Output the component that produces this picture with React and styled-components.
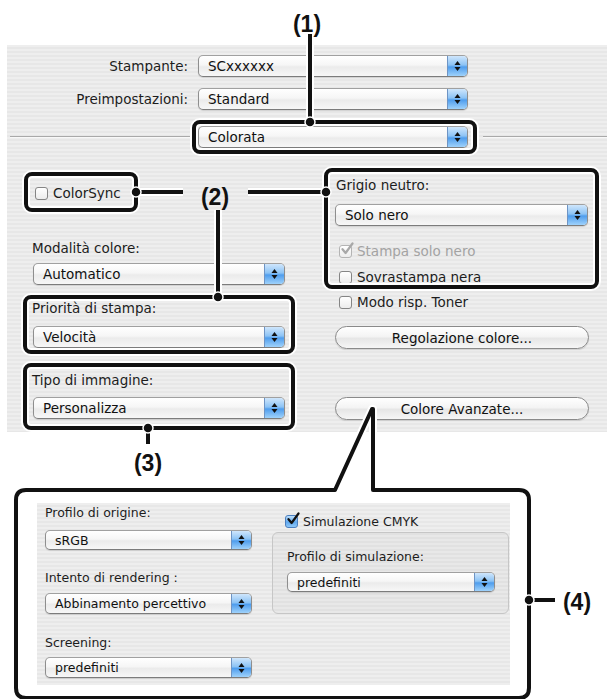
import styled, { createGlobalStyle } from "styled-components";

const GlobalStyle = createGlobalStyle`
  html, body {
    margin: 0;
    padding: 0;
    background: #fff;
  }
  body {
    font-family: "DejaVu Sans", Verdana, sans-serif;
  }
`;

const pinstripe = `
  background-color: #ebebeb;
  background-image: repeating-linear-gradient(
    to bottom,
    #eeeeee 0px,
    #eeeeee 2px,
    #e7e7e7 2px,
    #e7e7e7 4px
  );
`;

function Arrows() {
  return (
    <svg width="7" height="12" viewBox="0 0 7 12">
      <polygon points="3.5,1 6.5,5 0.5,5" fill="#111" />
      <polygon points="0.5,7 6.5,7 3.5,11" fill="#111" />
    </svg>
  );
}

function Dropdown({ value, w, h }) {
  return (
    <Popup $w={w} $h={h}>
      <PopupText>{value}</PopupText>
      <PopupButton>
        <Arrows />
      </PopupButton>
    </Popup>
  );
}

function CheckMark({ color }) {
  return (
    <svg width="14" height="14" viewBox="0 0 14 14">
      <path
        d="M2.5 7.2 L5.6 11 L12.5 1.5"
        fill="none"
        stroke={color}
        strokeWidth="2.2"
        strokeLinecap="round"
        strokeLinejoin="round"
      />
    </svg>
  );
}

function Check({ label, checked, disabled, blue, mt, ml }) {
  return (
    <CheckRow $mt={mt} $ml={ml} $disabled={disabled}>
      <Box $blue={blue} $disabled={disabled}>
        {checked && <CheckMark color={disabled ? "#a8a8a8" : "#111"} />}
      </Box>
      <span>{label}</span>
    </CheckRow>
  );
}

function Callouts() {
  const frame =
    "M16 500 Q16 490 26 490 L335 490 L372 409 L373 409 L373 490 L519 490 Q529 490 529 500 L529 688 Q529 698 519 698 L26 698 Q16 698 16 688 Z";
  const shapes = (
    <>
      <line x1="310" y1="34" x2="310" y2="122" />
      <rect x="194" y="122" width="281" height="30" rx="6" />
      <rect x="26" y="174" width="110" height="36" rx="6" />
      <line x1="136" y1="192" x2="183" y2="192" />
      <line x1="248" y1="192" x2="326" y2="192" />
      <rect x="326" y="170" width="271" height="117" rx="6" />
      <line x1="218" y1="210" x2="218" y2="297" />
      <rect x="25" y="297" width="268" height="55" rx="6" />
      <rect x="25" y="365" width="268" height="63" rx="6" />
      <line x1="148" y1="428" x2="148" y2="444" />
      <path d={frame} />
      <line x1="529" y1="600" x2="555" y2="600" />
    </>
  );
  const dots = [
    [310, 122],
    [136, 192],
    [326, 192],
    [218, 297],
    [148, 428],
    [529, 600],
  ];
  return (
    <Overlay width="607" height="699" viewBox="0 0 607 699">
      <g fill="none" stroke="#fff" strokeWidth="8" strokeLinejoin="round">
        {shapes}
      </g>
      <g fill="none" stroke="#111" strokeWidth="4" strokeLinejoin="round">
        {shapes}
      </g>
      {dots.map(([x, y]) => (
        <circle key={`${x}-${y}`} cx={x} cy={y} r="5" fill="#111" stroke="#fff" strokeWidth="1.5" />
      ))}
    </Overlay>
  );
}

export default function App() {
  return (
    <Page>
      <GlobalStyle />

      <Dialog>
        <HeaderRow>
          <RowLabel>Stampante:</RowLabel>
          <Dropdown value="SCxxxxxx" w={270} />
        </HeaderRow>
        <HeaderRow $gap={11}>
          <RowLabel>Preimpostazioni:</RowLabel>
          <Dropdown value="Standard" w={270} />
        </HeaderRow>
        <SeparatorRow>
          <Rule $ml={3} $w={180} />
          <PaneSelect>
            <Dropdown value="Colorata" w={270} />
          </PaneSelect>
          <Rule $ml={15} $grow />
        </SeparatorRow>

        <Columns>
          <LeftColumn>
            <Check label="ColorSync" mt={37} ml={2} />
            <FieldLabel $mt={39}>Modalità colore:</FieldLabel>
            <Spaced $mt={7}>
              <Dropdown value="Automatico" w={252} />
            </Spaced>
            <FieldLabel $mt={15}>Priorità di stampa:</FieldLabel>
            <Spaced $mt={10}>
              <Dropdown value="Velocità" w={252} />
            </Spaced>
            <FieldLabel $mt={24}>Tipo di immagine:</FieldLabel>
            <Spaced $mt={9}>
              <Dropdown value="Personalizza" w={252} />
            </Spaced>
          </LeftColumn>

          <RightColumn>
            <FieldLabel $mt={29} $ml={1}>Grigio neutro:</FieldLabel>
            <Spaced $mt={11}>
              <Dropdown value="Solo nero" w={253} />
            </Spaced>
            <Check label="Stampa solo nero" checked disabled mt={17} ml={4} />
            <Check label="Sovrastampa nera" mt={10} ml={4} />
            <Check label="Modo risp. Toner" mt={9} ml={4} />
            <PillButton $mt={16}>Regolazione colore...</PillButton>
            <PillButton $mt={48}>Colore Avanzate...</PillButton>
          </RightColumn>
        </Columns>
      </Dialog>

      <Advanced>
        <AdvLeft>
          <SmallLabel $mt={3}>Profilo di origine:</SmallLabel>
          <Spaced $mt={10}>
            <Dropdown value="sRGB" w={207} h={20} />
          </Spaced>
          <SmallLabel $mt={21}>Intento di rendering :</SmallLabel>
          <Spaced $mt={8}>
            <Dropdown value="Abbinamento percettivo" w={207} h={21} />
          </Spaced>
          <SmallLabel $mt={22}>Screening:</SmallLabel>
          <Spaced $mt={7}>
            <Dropdown value="predefiniti" w={207} h={21} />
          </Spaced>
        </AdvLeft>

        <AdvRight>
          <Check label="Simulazione CMYK" checked blue mt={10} ml={13} />
          <GroupBox>
            <SmallLabel>Profilo di simulazione:</SmallLabel>
            <Spaced $mt={8}>
              <Dropdown value="predefiniti" w={208} h={20} />
            </Spaced>
          </GroupBox>
        </AdvRight>
      </Advanced>

      <Callouts />
      <Tag $x={307} $y={24}>(1)</Tag>
      <Tag $x={215} $y={197}>(2)</Tag>
      <Tag $x={148} $y={463}>(3)</Tag>
      <Tag $x={577} $y={602}>(4)</Tag>
    </Page>
  );
}

const Page = styled.div`
  position: relative;
  width: 607px;
  height: 699px;
  overflow: hidden;
  background: #fff;
`;

const Dialog = styled.div`
  margin: 45px 0 0 7px;
  width: 600px;
  height: 387px;
  box-sizing: border-box;
  padding-top: 10px;
  ${pinstripe}
  font-size: 13.5px;
  color: #1d1d1d;
`;

const HeaderRow = styled.div`
  display: grid;
  grid-template-columns: 181px 270px;
  column-gap: 10px;
  align-items: center;
  margin-top: ${(p) => p.$gap || 0}px;
`;

const RowLabel = styled.div`
  text-align: right;
  line-height: 16px;
`;

const SeparatorRow = styled.div`
  display: flex;
  align-items: center;
  margin-top: 16px;
`;

const Rule = styled.div`
  height: 1px;
  background: #a9a9a9;
  border-bottom: 1px solid #f8f8f8;
  margin-left: ${(p) => p.$ml}px;
  width: ${(p) => (p.$w ? `${p.$w}px` : "auto")};
  flex: ${(p) => (p.$grow ? 1 : "none")};
`;

const PaneSelect = styled.div`
  margin-left: 8px;
`;

const Columns = styled.div`
  display: flex;
`;

const LeftColumn = styled.div`
  display: flex;
  flex-direction: column;
  margin-left: 26px;
  width: 252px;
`;

const RightColumn = styled.div`
  display: flex;
  flex-direction: column;
  margin-left: 50px;
  width: 254px;
`;

const FieldLabel = styled.div`
  line-height: 16px;
  margin-top: ${(p) => p.$mt || 0}px;
  margin-left: ${(p) => p.$ml || -1}px;
`;

const Spaced = styled.div`
  margin-top: ${(p) => p.$mt || 0}px;
`;

const Popup = styled.div`
  position: relative;
  display: flex;
  align-items: stretch;
  width: ${(p) => p.$w}px;
  height: ${(p) => p.$h || 22}px;
  box-sizing: border-box;
  border: 1px solid #8e8e8e;
  border-top-color: #a0a0a0;
  border-bottom-color: #7c7c7c;
  border-radius: 5px;
  background: linear-gradient(
    to bottom,
    #ffffff 0%,
    #f6f6f6 45%,
    #ebebeb 55%,
    #f7f7f7 100%
  );
  box-shadow: 0 1px 1px rgba(0, 0, 0, 0.12);
  overflow: hidden;
`;

const PopupText = styled.div`
  flex: 1;
  display: flex;
  align-items: center;
  padding-left: 9px;
  white-space: nowrap;
  color: #111;
`;

const PopupButton = styled.div`
  width: 19px;
  display: flex;
  align-items: center;
  justify-content: center;
  border-left: 1px solid #6e94c4;
  background: linear-gradient(
    to bottom,
    #cfe6fc 0%,
    #8cc3f5 45%,
    #4f9ded 55%,
    #9fd2fb 100%
  );
`;

const CheckRow = styled.div`
  display: flex;
  align-items: center;
  gap: 5px;
  height: 16px;
  margin-top: ${(p) => p.$mt || 0}px;
  margin-left: ${(p) => p.$ml || 0}px;
  color: ${(p) => (p.$disabled ? "#a3a3a3" : "#1d1d1d")};
`;

const Box = styled.div`
  position: relative;
  width: 13px;
  height: 13px;
  box-sizing: border-box;
  border: 1px solid ${(p) => (p.$blue ? "#4b7fbf" : p.$disabled ? "#b4b4b4" : "#858585")};
  border-radius: 3px;
  background: ${(p) =>
    p.$blue
      ? "linear-gradient(to bottom, #bfe0fb, #5fa8ef 55%, #8ec8f8)"
      : "linear-gradient(to bottom, #ffffff, #ececec)"};
  flex: none;

  svg {
    position: absolute;
    left: 0px;
    top: -4px;
  }
`;

const PillButton = styled.div`
  margin-top: ${(p) => p.$mt}px;
  height: 23px;
  box-sizing: border-box;
  border: 1px solid #8a8a8a;
  border-radius: 12px;
  background: linear-gradient(
    to bottom,
    #ffffff 0%,
    #f4f4f4 45%,
    #e6e6e6 55%,
    #f6f6f6 100%
  );
  box-shadow: 0 1px 1px rgba(0, 0, 0, 0.12);
  display: flex;
  align-items: center;
  justify-content: center;
  color: #111;
`;

const Advanced = styled.div`
  margin: 71px 0 0 37px;
  width: 473px;
  height: 182px;
  display: flex;
  ${pinstripe}
  font-size: 12.5px;
  color: #1d1d1d;
`;

const AdvLeft = styled.div`
  display: flex;
  flex-direction: column;
  margin-left: 8px;
  width: 207px;
`;

const AdvRight = styled.div`
  display: flex;
  flex-direction: column;
  margin-left: 20px;
  width: 237px;
`;

const SmallLabel = styled.div`
  line-height: 14px;
  margin-top: ${(p) => p.$mt || 0}px;
`;

const GroupBox = styled.div`
  margin-top: 3px;
  height: 82px;
  box-sizing: border-box;
  padding: 17px 0 0 14px;
  border: 1px solid #c6c6c6;
  border-radius: 6px;
  background: rgba(0, 0, 0, 0.025);
`;

const Overlay = styled.svg`
  position: absolute;
  left: 0;
  top: 0;
  pointer-events: none;
`;

const Tag = styled.span`
  position: absolute;
  left: ${(p) => p.$x}px;
  top: ${(p) => p.$y}px;
  transform: translate(-50%, -50%);
  font-family: "Liberation Sans", Arial, sans-serif;
  font-weight: bold;
  font-size: 23px;
  line-height: 1;
  color: #111;
`;
